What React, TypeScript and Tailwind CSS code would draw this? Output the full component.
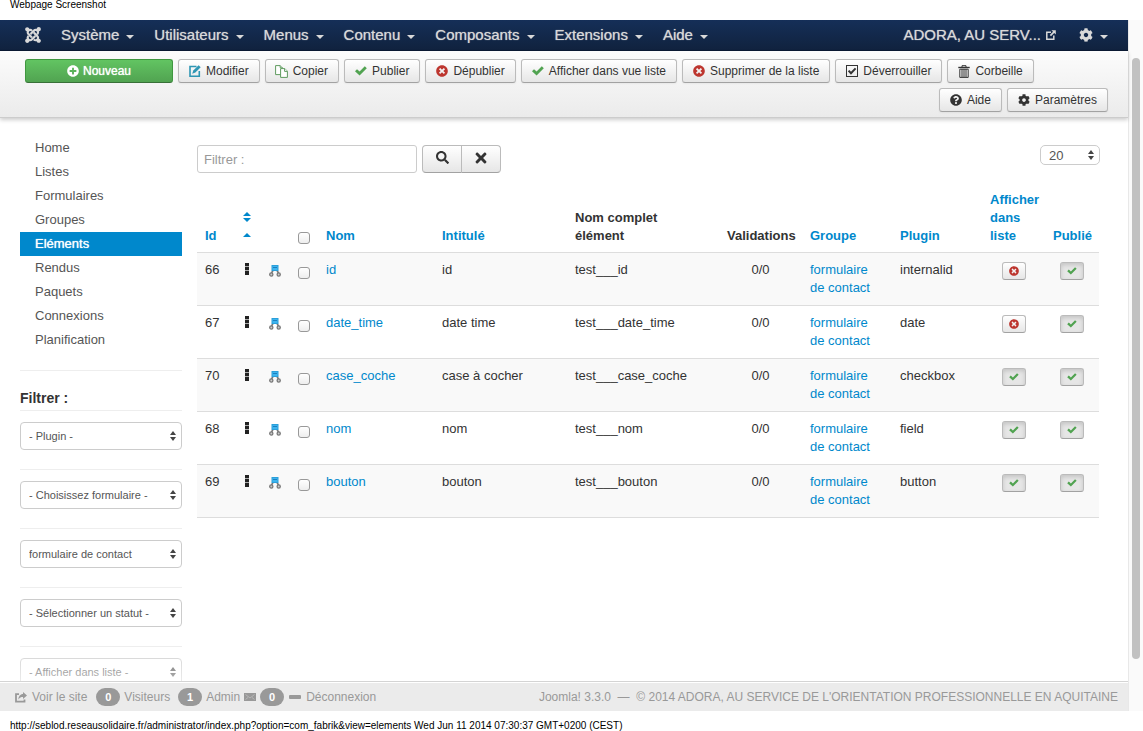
import type { ReactNode } from "react";
import {
  FaCog,
  FaJoomla,
  FaPlusCircle,
  FaQuestionCircle,
  FaSearch,
  FaTimes,
  FaTimesCircle,
} from "react-icons/fa";

const GREEN = "text-[#51a351]";
const RED = "text-[#bd362f]";

function CheckIcon({ className }: { className?: string }) {
  return (
    <svg viewBox="0 0 12 10" className={className} aria-hidden="true">
      <path d="M0 5.2l2-2 2.600 2.400L9.800.3l2 1.900-7.200 7.300z" fill="currentColor" />
    </svg>
  );
}

function EditIcon({ className }: { className?: string }) {
  return (
    <svg viewBox="0 0 12 12" className={className} aria-hidden="true">
      <path d="M7.5 1.5H1v9.7h9.3V6" fill="none" stroke="currentColor" strokeWidth="1.6" />
      <path d="M9.600.2l2.100 2.100-5.300 5.300-3.200 1.100 1.100-3.200z" fill="currentColor" />
    </svg>
  );
}

function CopyIcon() {
  return (
    <svg viewBox="0 0 13 13" className="-ml-px size-[13px]" aria-hidden="true" fill="#fff" stroke="#5f9b5f">
      <path d="M.6.6h4.6l2.200 2.200v6.800H.6z" />
      <path d="M5.200.6v2.200h2.200" />
      <path d="M5.600 3.600h4.200l2.600 2.600v6.200H5.600z" />
      <path d="M9.600 3.600v2.800h2.800" />
    </svg>
  );
}

function CheckboxIcon() {
  return (
    <svg viewBox="0 0 12 12" className="size-3" aria-hidden="true" fill="none" stroke="#333">
      <rect x=".5" y=".5" width="11" height="11" />
      <path d="M2.600 5.600l2.400 2.600 4.600-4.800" strokeWidth="2" />
    </svg>
  );
}

function TrashIcon() {
  return (
    <svg viewBox="0 0 12 13" className="h-[13px] w-3" aria-hidden="true" fill="none" stroke="#333">
      <path d="M.3 2.500h11.400" strokeWidth="1.400" />
      <path d="M4 2V.7h4V2" />
      <path d="M1.800 4.200v8.200h8.400V4.200z" />
      <path d="M4 4v8M6 4v8M8 4v8" />
    </svg>
  );
}

function ExternalIcon() {
  return (
    <svg viewBox="0 0 10 10" className="size-[10px]" aria-hidden="true">
      <path d="M5 2.200H.8v7h7V5.400" fill="none" stroke="currentColor" strokeWidth="1.500" />
      <path d="M5.400.2h4.400v4.400L8.200 3 5 6.300 3.800 5.100 7 1.800z" fill="currentColor" />
    </svg>
  );
}

function ShareIcon() {
  return (
    <svg viewBox="0 0 12 11" className="h-[11px] w-3" aria-hidden="true">
      <path d="M4 2.200H1v7.500h8.500V7.500" fill="none" stroke="currentColor" strokeWidth="1.800" />
      <path d="M8 0l4 3.500-4 3.500V5C6 5 4.800 5.600 3.400 7.600 3.400 4.400 5.400 2 8 2z" fill="currentColor" />
    </svg>
  );
}

function MailIcon() {
  return (
    <svg viewBox="0 0 12 8" className="h-2 w-3" aria-hidden="true">
      <rect width="12" height="8" fill="currentColor" />
      <path d="M1.500 1.500L6 5l4.500-3.500M1.500 6.500l2.500-2M10.500 6.500L8 4.500" fill="none" stroke="#c4c4c4" strokeWidth=".7" />
    </svg>
  );
}

function MinusIcon() {
  return (
    <svg viewBox="0 0 12 4" className="h-1 w-3" aria-hidden="true">
      <rect width="12" height="4" rx="1" fill="currentColor" />
    </svg>
  );
}

function TreeIcon() {
  return (
    <svg viewBox="0 0 12 12" className="size-3" aria-hidden="true">
      <path d="M4 5.500L2.500 8M8 5.500L9.500 8" stroke="#777" strokeWidth="1.500" />
      <rect x="3" y=".5" width="6" height="5" fill="#3db4ee" stroke="#2b9fda" />
      <rect x="4" y="2" width="4" height="1" fill="#1b7fc0" />
      <circle cx="2.300" cy="9.500" r="1.600" fill="#ccc" stroke="#777" strokeWidth="1.300" />
      <circle cx="9.700" cy="9.500" r="1.600" fill="#ccc" stroke="#777" strokeWidth="1.300" />
    </svg>
  );
}

function DragIcon() {
  return (
    <svg viewBox="0 0 4 12" className="h-3 w-1" aria-hidden="true">
      <rect width="4" height="12" fill="#aaa" />
      <path d="M0 0h4v3H0zM0 4h4v3H0zM0 8h4v4H0z" fill="#222" />
    </svg>
  );
}

function UpDown({ className }: { className?: string }) {
  return (
    <svg viewBox="0 0 6 10" className={className} aria-hidden="true" fill="currentColor">
      <path d="M3 0l3 4H0zM3 10l3-4H0z" />
    </svg>
  );
}

function SortIcon() {
  return (
    <svg viewBox="0 0 8 25" className="h-[25px] w-2" aria-hidden="true" fill="currentColor">
      <path d="M4 0l4 4H0zM4 10l4-4H0zM4 21l4 4H0z" />
    </svg>
  );
}

function Caret() {
  return (
    <svg viewBox="0 0 8 4" className="mt-[3px] h-1 w-2" aria-hidden="true">
      <path d="M0 0h8L4 4z" fill="currentColor" />
    </svg>
  );
}

const menus = ["Système", "Utilisateurs", "Menus", "Contenu", "Composants", "Extensions", "Aide"];

function NavBar() {
  return (
    <nav className="flex h-[31px] shrink-0 items-center border-b border-[#0b1a33] bg-linear-to-b from-[#152f58] to-[#10223e] pr-5 pl-6 text-[15px] text-[#d9d9d9] [text-shadow:0_0_1px_rgba(217,217,217,.8)]">
      <a href="#accueil" aria-label="Joomla" className="mr-[19px]">
        <FaJoomla className="size-[18px]" />
      </a>
      <div className="flex gap-5">
        {menus.map((m) => (
          <a key={m} href="#menu" className="flex items-center gap-[7px]">
            {m}
            <Caret />
          </a>
        ))}
      </div>
      <a href="#site" className="ml-auto flex items-center gap-[5px]">
        ADORA, AU SERV...
        <ExternalIcon />
      </a>
      <a href="#reglages" aria-label="Réglages" className="ml-[23px] flex items-center gap-[7px]">
        <FaCog className="size-[14px]" />
        <Caret />
      </a>
    </nav>
  );
}

function ToolButton({ icon, children }: { icon: ReactNode; children: ReactNode }) {
  return (
    <button className="flex h-6 items-center gap-[5px] rounded-[3px] border border-[#bbb] border-b-[#a2a2a2] bg-linear-to-b from-white to-[#e6e6e6] px-[10px] text-xs whitespace-nowrap text-[#333] shadow-[0_1px_2px_rgba(0,0,0,.05)]">
      {icon}
      {children}
    </button>
  );
}

function Toolbar() {
  const check = <CheckIcon className={`h-[10px] w-3 ${GREEN}`} />;
  const cross = <FaTimesCircle className={`size-3 ${RED}`} />;
  return (
    <div className="z-10 flex shrink-0 flex-wrap gap-[5px] border-b border-[#ccc] bg-linear-to-b from-[#fcfcfc] to-[#ebebeb] pt-2 pr-5 pb-[5px] pl-[25px] shadow-[0_2px_4px_rgba(0,0,0,.2)]">
      <button className="flex h-6 w-[148px] items-center justify-center gap-1 rounded-[3px] border border-[#409740] border-b-[#387038] bg-linear-to-b from-[#62c462] to-[#51a351] text-xs text-white [text-shadow:0_0_1px_#fff]">
        <FaPlusCircle className="size-3" />
        Nouveau
      </button>
      <ToolButton icon={<EditIcon className="size-3 text-[#2f96b4]" />}>Modifier</ToolButton>
      <ToolButton icon={<CopyIcon />}>Copier</ToolButton>
      <ToolButton icon={check}>Publier</ToolButton>
      <ToolButton icon={cross}>Dépublier</ToolButton>
      <ToolButton icon={check}>Afficher dans vue liste</ToolButton>
      <ToolButton icon={cross}>Supprimer de la liste</ToolButton>
      <ToolButton icon={<CheckboxIcon />}>Déverrouiller</ToolButton>
      <ToolButton icon={<TrashIcon />}>Corbeille</ToolButton>
      <div className="ml-auto flex gap-[5px]">
        <ToolButton icon={<FaQuestionCircle className="size-3" />}>Aide</ToolButton>
        <ToolButton icon={<FaCog className="size-3" />}>Paramètres</ToolButton>
      </div>
    </div>
  );
}

const links = ["Home", "Listes", "Formulaires", "Groupes", "Eléments", "Rendus", "Paquets", "Connexions", "Planification"];
const filters = ["- Plugin -", "- Choisissez formulaire -", "formulaire de contact", "- Sélectionner un statut -", "- Afficher dans liste -"];

function Sidebar() {
  return (
    <aside className="w-[162px] shrink-0">
      <ul>
        {links.map((l) => (
          <li key={l}>
            <a
              href="#section"
              className={
                l === "Eléments"
                  ? "block bg-[#08c] pl-[15px] leading-6 text-white [text-shadow:0_0_1px_#fff]"
                  : "block pl-[15px] leading-6 text-[#555]"
              }
            >
              {l}
            </a>
          </li>
        ))}
      </ul>
      <hr className="mt-[18px] border-[#eee]" />
      <h4 className="mt-[18px] mb-[3px] text-sm leading-[18px] font-bold text-[#333]">Filtrer :</h4>
      {filters.map((f) => (
        <div key={f} className="mb-[19px] border-t border-[#eee] pt-[11px]">
          <div className="relative">
            <select
              aria-label={f}
              className="block h-7 w-full appearance-none rounded-[4px] border border-[#ccc] bg-white pl-2 text-[11px] text-[#555]"
            >
              <option>{f}</option>
            </select>
            <UpDown className="pointer-events-none absolute top-[9px] right-[6px] h-[10px] w-[6px] text-[#444]" />
          </div>
        </div>
      ))}
    </aside>
  );
}

type Row = { id: number; name: string; label: string; full: string; plugin: string; listed: boolean };

const rows: Row[] = [
  { id: 66, name: "id", label: "id", full: "test___id", plugin: "internalid", listed: false },
  { id: 67, name: "date_time", label: "date time", full: "test___date_time", plugin: "date", listed: false },
  { id: 70, name: "case_coche", label: "case à cocher", full: "test___case_coche", plugin: "checkbox", listed: true },
  { id: 68, name: "nom", label: "nom", full: "test___nom", plugin: "field", listed: true },
  { id: 69, name: "bouton", label: "bouton", full: "test___bouton", plugin: "button", listed: true },
];

function Tick({ label }: { label: string }) {
  return (
    <input
      type="checkbox"
      aria-label={label}
      className="block size-3 appearance-none rounded-[3px] border border-[#999] bg-linear-to-b from-white to-[#eee]"
    />
  );
}

function StateButton({ on, label }: { on: boolean; label: string }) {
  return (
    <button
      aria-label={label}
      aria-pressed={on}
      className={
        on
          ? "mx-auto mt-px flex h-[18px] w-6 items-center justify-center rounded-[3px] border border-[#bbb] border-b-[#a2a2a2] bg-[#e6e6e6] shadow-[inset_0_2px_4px_rgba(0,0,0,.15)]"
          : "mx-auto mt-px flex h-[18px] w-6 items-center justify-center rounded-[3px] border border-[#bbb] border-b-[#a2a2a2] bg-linear-to-b from-white to-[#e6e6e6]"
      }
    >
      {on ? <CheckIcon className={`h-2 w-[10px] ${GREEN}`} /> : <FaTimesCircle className={`size-[10px] ${RED}`} />}
    </button>
  );
}

function ElementsTable() {
  const head = "px-2 pt-2 pb-[7px] text-left align-bottom font-bold";
  const cell = "p-2 align-top";
  return (
    <table className="w-full table-fixed border-collapse leading-[18px]">
      <colgroup>
        <col className="w-[36px]" />
        <col className="w-[28px]" />
        <col className="w-[29px]" />
        <col className="w-[28px]" />
        <col className="w-[116px]" />
        <col className="w-[133px]" />
        <col />
        <col className="w-[83px]" />
        <col className="w-[90px]" />
        <col className="w-[90px]" />
        <col className="w-[63px]" />
        <col className="w-[54px]" />
      </colgroup>
      <thead className="text-[#08c]">
        <tr>
          <th className={head}>Id</th>
          <th className="p-2 align-bottom">
            <button aria-label="Ordre" className="mx-auto flex justify-center pb-[7px]">
              <SortIcon />
            </button>
          </th>
          <th className={head} />
          <th className="p-2 align-bottom">
            <Tick label="Tout cocher" />
          </th>
          <th className={head}>Nom</th>
          <th className={head}>Intitulé</th>
          <th className={`${head} text-[#333]`}>
            Nom complet
            <br />
            élément
          </th>
          <th className={`${head} text-[#333]`}>Validations</th>
          <th className={head}>Groupe</th>
          <th className={head}>Plugin</th>
          <th className={head}>
            Afficher
            <br />
            dans
            <br />
            liste
          </th>
          <th className={head}>Publié</th>
        </tr>
      </thead>
      <tbody>
        {rows.map((r) => (
          <tr key={r.id} className="border-y border-[#ddd] odd:bg-[#f9f9f9]">
            <td className={cell}>{r.id}</td>
            <td className="p-2 align-top">
              <div className="flex justify-center pt-[2px]">
                <DragIcon />
              </div>
            </td>
            <td className="p-2 align-top">
              <div className="pt-1">
                <TreeIcon />
              </div>
            </td>
            <td className="p-2 align-top">
              <div className="pt-[6px]">
                <Tick label={`Cocher ${r.name}`} />
              </div>
            </td>
            <td className={`${cell} text-[#08c]`}>
              <a href="#element">{r.name}</a>
            </td>
            <td className={cell}>{r.label}</td>
            <td className={cell}>{r.full}</td>
            <td className={`${cell} text-center`}>0/0</td>
            <td className={`${cell} text-[#08c]`}>
              <a href="#groupe">
                formulaire
                <br />
                de contact
              </a>
            </td>
            <td className={cell}>{r.plugin}</td>
            <td className={cell}>
              <StateButton on={r.listed} label={`Afficher ${r.name} dans liste`} />
            </td>
            <td className={cell}>
              <StateButton on label={`Publier ${r.name}`} />
            </td>
          </tr>
        ))}
      </tbody>
    </table>
  );
}

function Main() {
  const iconButton =
    "flex h-7 w-10 items-center justify-center border border-[#bbb] border-b-[#a2a2a2] bg-linear-to-b from-white to-[#e6e6e6] pb-[3px] text-[#333]";
  return (
    <main className="min-w-0 flex-1">
      <div className="flex items-start pt-[9px]">
        <input
          aria-label="Filtrer"
          placeholder="Filtrer :"
          className="h-7 w-[220px] rounded-[3px] border border-[#ccc] px-[6px] text-[13px] placeholder:text-[#999]"
        />
        <div className="ml-[5px] flex">
          <button aria-label="Rechercher" className={`${iconButton} rounded-l-[4px]`}>
            <FaSearch className="size-[13px]" />
          </button>
          <button aria-label="Effacer" className={`${iconButton} -ml-px rounded-r-[4px]`}>
            <FaTimes className="size-4" />
          </button>
        </div>
        <div className="relative ml-auto">
          <select
            aria-label="Nombre de lignes"
            className="block h-5 w-[60px] appearance-none rounded-[5px] border border-[#ccc] bg-white pl-2 text-[13px] text-[#555]"
          >
            <option>20</option>
          </select>
          <UpDown className="pointer-events-none absolute top-[5px] right-[6px] h-[10px] w-[6px] text-[#444]" />
        </div>
      </div>
      <div className="pt-[10px] pr-px">
        <ElementsTable />
      </div>
    </main>
  );
}

function Badge({ children }: { children: ReactNode }) {
  return (
    <span className="flex h-[18px] w-6 items-center justify-center rounded-full bg-[#999] text-[11px] font-bold text-white">
      {children}
    </span>
  );
}

function StatusBar() {
  return (
    <footer className="z-10 shrink-0 border-t border-[#d4d4d4] bg-white pt-px">
      <div className="flex h-7 items-center bg-[#ebebeb] pr-[10px] pl-[15px] text-xs whitespace-nowrap text-[#999]">
        <a href="#voir" className="mr-[9px] flex items-center gap-[5px]">
          <ShareIcon />
          Voir le site
        </a>
        <div className="flex items-center gap-1">
          <Badge>0</Badge>
          Visiteurs
          <span />
          <Badge>1</Badge>
          Admin
          <MailIcon />
          <Badge>0</Badge>
        </div>
        <a href="#deconnexion" className="ml-[5px] flex items-center gap-[5px]">
          <MinusIcon />
          Déconnexion
        </a>
        <p className="ml-auto">
          Joomla! 3.3.0 &nbsp;—&nbsp; © 2014 ADORA, AU SERVICE DE L'ORIENTATION PROFESSIONNELLE EN AQUITAINE
        </p>
      </div>
    </footer>
  );
}

export default function App() {
  return (
    <div className="flex h-screen flex-col overflow-hidden bg-white font-['Liberation_Sans',Arial,sans-serif] text-[13px] text-[#333]">
      <p className="h-5 shrink-0 pl-[10px] text-[10px] leading-[9px] text-black">Webpage Screenshot</p>
      <div className="flex min-h-0 flex-1">
        <div className="flex min-w-0 flex-1 flex-col">
          <NavBar />
          <Toolbar />
          <div className="relative min-h-0 flex-1 overflow-hidden">
            <div className="flex gap-[15px] pt-[18px] pr-7 pl-5">
              <Sidebar />
              <Main />
            </div>
            <div className="pointer-events-none absolute inset-x-0 bottom-0 h-7 bg-linear-to-b from-white/20 to-white/60" />
          </div>
          <StatusBar />
        </div>
        <div className="flex w-[15px] shrink-0 flex-col border-l border-[#e8e8e8] bg-[#fafafa] pt-[38px] pr-[3px] pb-[52px] pl-[3px]">
          <div className="flex-1 rounded-full bg-[#c1c1c1]" />
        </div>
      </div>
      <p className="h-5 shrink-0 truncate pl-[10px] text-[10px] leading-[29px] text-black">
        http://seblod.reseausolidaire.fr/administrator/index.php?option=com_fabrik&amp;view=elements Wed Jun 11 2014 07:30:37 GMT+0200 (CEST)
      </p>
    </div>
  );
}
